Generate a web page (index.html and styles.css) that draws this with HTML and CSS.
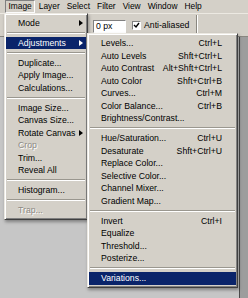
FILE: index.html
```html
<!DOCTYPE html>
<html lang="en">
<head>
  <meta charset="UTF-8" />
  <title>Image menu</title>
  <link rel="stylesheet" href="styles.css">
</head>
<body>

  <div class="menubar">
    <span class="menubar-item open">Image</span>
    <span class="menubar-item">Layer</span>
    <span class="menubar-item">Select</span>
    <span class="menubar-item">Filter</span>
    <span class="menubar-item">View</span>
    <span class="menubar-item">Window</span>
    <span class="menubar-item">Help</span>
  </div>

  <div class="options">
    <span class="field">0 px</span>
    <span class="check">
      <svg width="7" height="7" viewBox="0 0 7 7"><path d="M1 3 L3 5 L6 1" fill="none" stroke="#000" stroke-width="1.4"/></svg>
    </span>
    <span class="check-label">Anti-aliased</span>
    <span class="divider"></span>
  </div>

  <div class="workspace">
    <div class="canvas-area"></div>
    <div class="doc-edge"></div>
  </div>

  <!-- Image menu -->
  <div class="menu image-menu">
    <div class="item">Mode <i class="arrow"></i></div>
    <div class="sep"></div>
    <div class="item active">Adjustments <i class="arrow"></i></div>
    <div class="sep"></div>
    <div class="item">Duplicate...</div>
    <div class="item">Apply Image...</div>
    <div class="item">Calculations...</div>
    <div class="sep"></div>
    <div class="item">Image Size...</div>
    <div class="item">Canvas Size...</div>
    <div class="item">Rotate Canvas <i class="arrow"></i></div>
    <div class="item disabled">Crop</div>
    <div class="item">Trim...</div>
    <div class="item">Reveal All</div>
    <div class="sep"></div>
    <div class="item">Histogram...</div>
    <div class="sep"></div>
    <div class="item disabled">Trap...</div>
  </div>

  <!-- Adjustments submenu -->
  <div class="menu adjust-menu">
    <div class="item">Levels...<span class="key">Ctrl+L</span></div>
    <div class="item">Auto Levels<span class="key">Shft+Ctrl+L</span></div>
    <div class="item">Auto Contrast<span class="key">Alt+Shft+Ctrl+L</span></div>
    <div class="item">Auto Color<span class="key">Shft+Ctrl+B</span></div>
    <div class="item">Curves...<span class="key">Ctrl+M</span></div>
    <div class="item">Color Balance...<span class="key">Ctrl+B</span></div>
    <div class="item">Brightness/Contrast...</div>
    <div class="sep"></div>
    <div class="item">Hue/Saturation...<span class="key">Ctrl+U</span></div>
    <div class="item">Desaturate<span class="key">Shft+Ctrl+U</span></div>
    <div class="item">Replace Color...</div>
    <div class="item">Selective Color...</div>
    <div class="item">Channel Mixer...</div>
    <div class="item">Gradient Map...</div>
    <div class="sep"></div>
    <div class="item">Invert<span class="key">Ctrl+I</span></div>
    <div class="item">Equalize</div>
    <div class="item">Threshold...</div>
    <div class="item">Posterize...</div>
    <div class="sep"></div>
    <div class="item active">Variations...</div>
  </div>

</body>
</html>
```

FILE: styles.css
```css
body {
  margin: 0;
  width: 248px;
  height: 298px;
  overflow: hidden;
  display: flex;
  flex-direction: column;
  position: relative;
  background-color: #c6c6c6;
  font-family: 'Liberation Sans', Arial, sans-serif;
  font-size: 8.7px;
  color: #000;
}

.menubar {
  display: flex;
  height: 13px;
  padding-left: 5px;
  background-color: #d4d0c8;
  font-size: 8.4px;
}

.menubar-item {
  padding: 0 2.5px;
  line-height: 12px;
  border: 1px solid transparent;
  border-top: none;
}

.menubar-item.open {
  border-color: #808080 #fff #fff #808080;
  border-top: 1px solid #808080;
  line-height: 11px;
}

.options {
  display: flex;
  align-items: center;
  height: 22px;
  padding-left: 93px;
  background-color: #d4d0c8;
  border-top: 1px solid #ece9e2;
  border-bottom: 1px solid #8a8780;
}

.field {
  width: 29px;
  height: 11px;
  line-height: 11px;
  padding-left: 2px;
  margin-top: 2px;
  background-color: #fff;
  border: 1px solid;
  border-color: #808080 #fff #fff #808080;
}

.check {
  display: flex;
  width: 7px;
  height: 7px;
  margin-left: 6px;
  background-color: #fff;
  border: 1px solid;
  border-color: #808080 #fff #fff #808080;
}

.check-label {
  margin-left: 3px;
}

.divider {
  width: 1px;
  height: 20px;
  margin-left: 7px;
  background-color: #8a8780;
  border-right: 1px solid #fff;
}

.workspace {
  flex: 1;
  display: flex;
}

.canvas-area {
  flex: 1;
}

.doc-edge {
  width: 8px;
  background-color: #9d9d9d;
  border-left: 1px solid #4a4a4a;
}

/* dropdowns */
.menu {
  position: absolute;
  box-sizing: border-box;
  padding: 2.5px 1px 2px;
  background-color: #d4d0c8;
  border: 1px solid;
  border-color: #ece9e2 #404040 #404040 #ece9e2;
  box-shadow: inset 1px 1px #fff, inset -1px -1px #808080, 1px 2px 3px rgba(0,0,0,0.35);
}

.image-menu {
  left: 4px;
  top: 13px;
  width: 84px;
}

.adjust-menu {
  left: 87px;
  top: 33px;
  width: 151px;
  padding-top: 3px;
}

.item {
  display: flex;
  align-items: center;
  height: 12.5px;
  padding: 0 14px 0 12px;
  white-space: nowrap;
}

.image-menu .item {
  padding-right: 3px;
}

.item.active {
  background-color: #0a246a;
  color: #fff;
}

.item.disabled {
  color: #8d8a84;
  text-shadow: 1px 1px #fff;
}

.key {
  margin-left: auto;
}

.arrow {
  margin-left: auto;
  width: 0;
  height: 0;
  border-left: 4px solid #000;
  border-top: 3.5px solid transparent;
  border-bottom: 3.5px solid transparent;
}

.item.active .arrow {
  border-left-color: #fff;
}

.sep {
  display: flex;
  align-items: center;
  height: 7.5px;
  margin: 0 1px;
}

.sep::before {
  content: "";
  flex: 1;
  height: 1px;
  background-color: #9a978f;
  border-bottom: 1px solid #fff;
}
```
